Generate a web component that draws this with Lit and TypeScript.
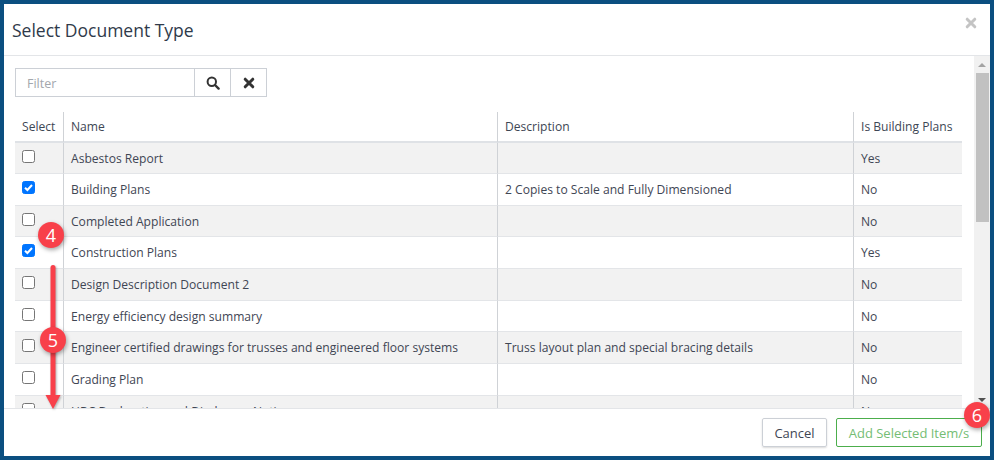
import { LitElement, html, css, svg } from 'lit';
import { customElement } from 'lit/decorators.js';

const rows = [
  { name: 'Asbestos Report', desc: '', plans: 'Yes', checked: false },
  { name: 'Building Plans', desc: '2 Copies to Scale and Fully Dimensioned', plans: 'No', checked: true },
  { name: 'Completed Application', desc: '', plans: 'No', checked: false },
  { name: 'Construction Plans', desc: '', plans: 'Yes', checked: true },
  { name: 'Design Description Document 2', desc: '', plans: 'No', checked: false },
  { name: 'Energy efficiency design summary', desc: '', plans: 'No', checked: false },
  { name: 'Engineer certified drawings for trusses and engineered floor systems', desc: 'Truss layout plan and special bracing details', plans: 'No', checked: false },
  { name: 'Grading Plan', desc: '', plans: 'No', checked: false },
  { name: 'HBC Declaration and Disclosure Notice', desc: '', plans: 'No', checked: false },
];

const timesIcon = (size: number, color: string) => svg`
  <svg width=${size} height=${size} viewBox="0 0 12 12">
    <path d="M2.2 2.2 9.8 9.8M9.8 2.2 2.2 9.8" stroke=${color} stroke-width="3" stroke-linecap="round" fill="none"></path>
  </svg>`;

@customElement('app-root')
export class AppRoot extends LitElement {
  static styles = css`
    :host {
      display: block;
      width: 994px;
      height: 460px;
      box-sizing: border-box;
      border: 4px solid #0b4f80;
      font-family: 'Open Sans', sans-serif;
      font-size: 12.1px;
      color: #3f4654;
      position: relative;
      overflow: hidden;
    }
    .modal {
      height: 452px;
      background: #fff;
      display: flex;
      flex-direction: column;
    }
    .header {
      height: 52px;
      flex: none;
      box-sizing: border-box;
      border-bottom: 1px solid #e3e5e8;
      display: flex;
      justify-content: space-between;
      padding: 14px 13px 0 8px;
    }
    .title {
      font-size: 17.5px;
      line-height: 24px;
      color: #2f3a4a;
    }
    .close {
      margin-top: -2px;
    }
    .body {
      height: 352px;
      flex: none;
      display: flex;
      overflow: hidden;
    }
    .content {
      width: 958px;
      flex: none;
      box-sizing: border-box;
      padding: 12px 0 0 11px;
    }
    .filter {
      display: flex;
      height: 29px;
      width: 252px;
      box-sizing: border-box;
      border: 1px solid #ccd0d6;
      margin-bottom: 15px;
    }
    .filter-input {
      width: 178px;
      flex: none;
      box-sizing: border-box;
      padding-left: 11px;
      font-size: 12.5px;
      line-height: 29px;
      color: #a3a7ad;
    }
    .filter-btn {
      flex: 1;
      border-left: 1px solid #ccd0d6;
      display: flex;
      align-items: center;
      justify-content: center;
    }
    .table {
      display: grid;
      grid-template-columns: 48px 434px 356px 109px;
      grid-template-rows: 31px 31px;
      grid-auto-rows: 31.7px;
    }
    .cell {
      display: flex;
      align-items: center;
      padding-left: 7px;
      border-left: 1px solid #cfd2d6;
      border-bottom: 1px solid #e3e5e8;
      box-sizing: border-box;
      white-space: nowrap;
      overflow: hidden;
    }
    .cell.first {
      border-left: none;
    }
    .cell.head {
      font-weight: 500;
      font-size: 12.1px;
      color: #3d4654;
      border-bottom: 2px solid #dfe2e6;
    }
    .cell.alt {
      background: #f2f2f2;
    }
    .check {
      width: 13px;
      height: 13px;
      box-sizing: border-box;
      border: 1px solid #767676;
      border-radius: 2.5px;
      background: #fff;
      margin-top: -4px;
      display: flex;
      align-items: center;
      justify-content: center;
    }
    .check.on {
      background: #0075ff;
      border-color: #0075ff;
    }
    .scrollbar {
      width: 16px;
      margin-left: 12px;
      background: #f1f1f1;
      display: flex;
      flex-direction: column;
      align-items: center;
      flex: none;
    }
    .arrow-up, .arrow-down {
      width: 0;
      height: 0;
      border-left: 4px solid transparent;
      border-right: 4px solid transparent;
    }
    .arrow-up {
      border-bottom: 4px solid #a3a3a3;
      margin: 7px 0 6px;
    }
    .arrow-down {
      border-top: 4px solid #505050;
      margin-top: auto;
      margin-bottom: 6px;
    }
    .thumb {
      width: 13px;
      height: 149px;
      background: #c1c1c1;
      margin-left: 1px;
    }
    .footer {
      flex: 1;
      box-sizing: border-box;
      border-top: 1px solid #e3e5e8;
      display: flex;
      justify-content: flex-end;
      gap: 9px;
      padding: 9px 8px 0 0;
    }
    .btn {
      height: 29px;
      box-sizing: border-box;
      border-radius: 2px;
      display: flex;
      align-items: center;
      justify-content: center;
      font-size: 13px;
    }
    .cancel {
      width: 65px;
      border: 1px solid #ccd0d6;
      box-shadow: 0 1px 2px rgba(0, 0, 0, 0.15);
      color: #3f4654;
    }
    .add {
      width: 146px;
      border: 1px solid #4cae4c;
      color: #74bd74;
    }
    .badge {
      position: absolute;
      width: 26px;
      height: 26px;
      border-radius: 50%;
      background: #f8404a;
      color: #fff;
      font-size: 18px;
      display: flex;
      align-items: center;
      justify-content: center;
      box-shadow: 1px 2px 4px rgba(0, 0, 0, 0.35);
    }
    .b4 { left: 34px; top: 218px; }
    .b5 { left: 36px; top: 323px; }
    .b6 { left: 960px; top: 398px; }
    .arrow {
      position: absolute;
      left: 40px;
      top: 261px;
      filter: drop-shadow(1px 1px 1px rgba(0, 0, 0, 0.3));
    }
  `;

  render() {
    return html`
      <div class="modal">
        <div class="header">
          <div class="title">Select Document Type</div>
          <div class="close">${timesIcon(12, '#c4c4c4')}</div>
        </div>
        <div class="body">
          <div class="content">
            <div class="filter">
              <div class="filter-input">Filter</div>
              <div class="filter-btn">
                <svg width="14" height="14" viewBox="0 0 14 14">
                  <circle cx="5.8" cy="5.8" r="4.2" fill="none" stroke="#333" stroke-width="2"></circle>
                  <path d="M9 9l3.6 3.6" stroke="#333" stroke-width="2.4" stroke-linecap="round"></path>
                </svg>
              </div>
              <div class="filter-btn">${timesIcon(12, '#333')}</div>
            </div>
            <div class="table">
              <div class="cell head first">Select</div>
              <div class="cell head">Name</div>
              <div class="cell head">Description</div>
              <div class="cell head">Is Building Plans</div>
              ${rows.map((r, i) => {
                const alt = i % 2 === 0 ? 'alt' : '';
                return html`
                  <div class="cell first ${alt}">
                    <div class="check ${r.checked ? 'on' : ''}">
                      ${r.checked
                        ? html`<svg width="11" height="11" viewBox="0 0 11 11">
                            <path d="M2 5.7 4.4 8 9 3" fill="none" stroke="#fff" stroke-width="2"></path>
                          </svg>`
                        : ''}
                    </div>
                  </div>
                  <div class="cell ${alt}">${r.name}</div>
                  <div class="cell ${alt}">${r.desc}</div>
                  <div class="cell ${alt}">${r.plans}</div>
                `;
              })}
            </div>
          </div>
          <div class="scrollbar">
            <div class="arrow-up"></div>
            <div class="thumb"></div>
            <div class="arrow-down"></div>
          </div>
        </div>
        <div class="footer">
          <div class="btn cancel">Cancel</div>
          <div class="btn add">Add Selected Item/s</div>
        </div>
      </div>
      <svg class="arrow" width="18" height="148" viewBox="0 0 18 148">
        <rect x="6.5" y="0" width="5" height="134" rx="2.5" fill="#f8404a"></rect>
        <path d="M1.5 130h15L9 144z" fill="#f8404a"></path>
      </svg>
      <div class="badge b4">4</div>
      <div class="badge b5">5</div>
      <div class="badge b6">6</div>
    `;
  }
}
